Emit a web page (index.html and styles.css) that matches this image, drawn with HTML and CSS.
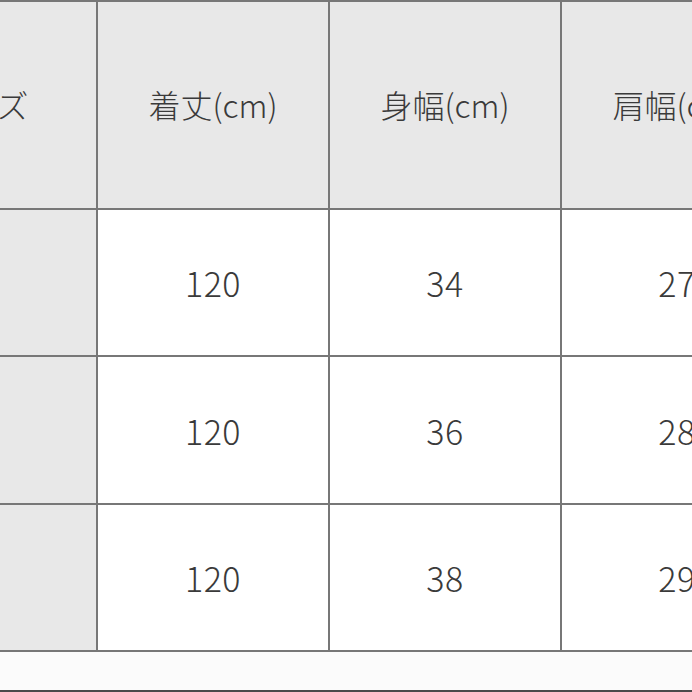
FILE: index.html
```html
<!DOCTYPE html>
<html lang="ja">
<head>
<meta charset="utf-8">
<link rel="stylesheet" href="styles.css">
</head>
<body>
<div class="page">
  <div class="table">
    <div class="cell head">サイズ</div>
    <div class="cell head">着丈(cm)</div>
    <div class="cell head">身幅(cm)</div>
    <div class="cell head">肩幅(cm)</div>

    <div class="cell side r1"></div>
    <div class="cell num r1">120</div>
    <div class="cell num r1">34</div>
    <div class="cell num r1">27</div>

    <div class="cell side r2"></div>
    <div class="cell num r2">120</div>
    <div class="cell num r2">36</div>
    <div class="cell num r2">28</div>

    <div class="cell side r3"></div>
    <div class="cell num r3">120</div>
    <div class="cell num r3">38</div>
    <div class="cell num r3">29</div>
  </div>
  <div class="footer"></div>
</div>
</body>
</html>
```

FILE: styles.css
```css
html, body {
  margin: 0;
  padding: 0;
  background: #ffffff;
  overflow: hidden;
}

.page {
  width: 692px;
  height: 692px;
  overflow: hidden;
  display: flex;
  flex-direction: column;
  font-family: "Noto Sans CJK JP", "Noto Sans", sans-serif;
  font-weight: 300;
  color: #3a3a3a;
}

.table {
  margin-left: -134px;
  width: 928px;
  display: grid;
  grid-template-columns: 232px 232px 232px 232px;
  grid-template-rows: 208px 147px 148px 147px;
  border-top: 2px solid #777777;
  flex: none;
}

.cell {
  box-sizing: border-box;
  border-right: 2px solid #777777;
  border-bottom: 2px solid #777777;
  display: flex;
  align-items: center;
  justify-content: center;
  white-space: nowrap;
  background: #ffffff;
}

.head {
  background: #e8e8e8;
  font-size: 32px;
  padding-bottom: 2px;
}

.side {
  background: #e8e8e8;
}

.num {
  font-size: 34px;
  letter-spacing: 0.5px;
}

.footer {
  flex: 1;
  background: #fbfbfb;
  border-bottom: 2px solid #4a4a4a;
}
```
